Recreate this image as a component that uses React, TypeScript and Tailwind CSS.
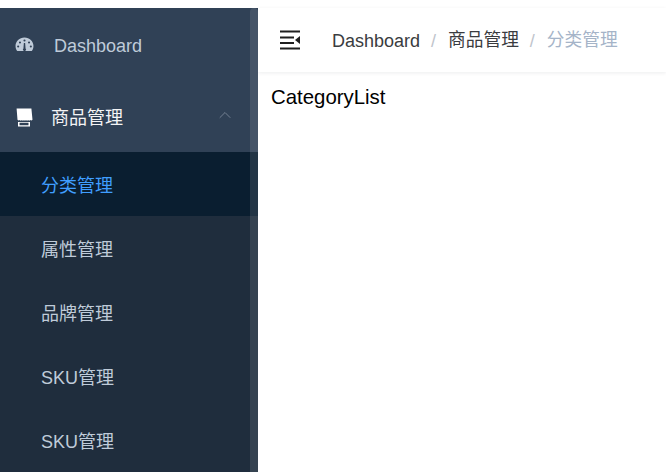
import React from "react";
import { ChevronUp } from "lucide-react";

const FONT = "font-['Liberation_Sans','Noto_Sans_CJK_SC',sans-serif]";

function GaugeIcon() {
  return (
    <svg width="19" height="15" viewBox="0 0 18 15" preserveAspectRatio="none">
      <path
        fill="#bfcbd9"
        fillRule="evenodd"
        d="M9 0.500C4.200 0.500 0.500 4.300 0.500 9c0 1.900 0.600 3.700 1.600 5.100h13.800c1-1.400 1.600-3.200 1.600-5.100C17.500 4.300 13.800 0.500 9 0.500zM9 2.500a1 1 0 1 1 0 2a1 1 0 0 1 0-2zM4.700 4.500a1 1 0 1 1 0 2a1 1 0 0 1 0-2zM13.300 4.500a1 1 0 1 1 0 2a1 1 0 0 1 0-2zM3 8.500a1 1 0 1 1 0 2a1 1 0 0 1 0-2zM15 8.500a1 1 0 1 1 0 2a1 1 0 0 1 0-2zM9.600 6l0.400 5.400a1.500 1.500 0 1 1-2 0L8.400 6z"
      />
    </svg>
  );
}

function ShopIcon() {
  return (
    <svg width="18" height="19" viewBox="0 0 18 19">
      <path fill="#ffffff" d="M1.600 0.500h14.800l1.100 11.300c-0.700 1-1.700 1-2.300 0.300c-0.600 0.700-1.500 0.700-2.100 0c-0.600 0.700-1.500 0.700-2.100 0c-0.600 0.700-1.500 0.700-2 0c-0.600 0.700-1.500 0.700-2.100 0c-0.600 0.700-1.500 0.700-2.100 0c-0.600 0.700-1.600 0.700-2.300-0.300z" />
      <path fill="#ffffff" d="M3 14h12v4.500H3zM4.500 14.800v2.400h9v-2.400z" />
    </svg>
  );
}

function CollapseIcon() {
  return (
    <svg width="22" height="20" viewBox="0 0 22 20">
      <path fill="#1f1f1f" d="M1 0.500h20v2H1zM1 6.500h14v2H1zM1 12h14v2H1zM1 17.500h20v2H1zM21 6v8l-5-4z" />
    </svg>
  );
}

function SubItem({ label, active }: { label: string; active?: boolean }) {
  return (
    <div
      className={
        active
          ? "h-16 flex items-center pl-[41px] pt-1 bg-[#0a1e30] text-[#409eff] text-lg"
          : "h-16 flex items-center pl-[41px] pt-1 bg-[#1f2d3d] text-[#bfcbd9] text-lg"
      }
    >
      {label}
    </div>
  );
}

export default function App() {
  return (
    <div className={`${FONT} h-[472px] w-[666px] overflow-hidden bg-white pt-2 flex`}>
      {/* Sidebar */}
      <div className="relative w-[258px] shrink-0 bg-[#304156] overflow-hidden">
        <div className="h-[72px] flex items-center pl-[15px] pt-px gap-[20px] text-lg text-[#bfcbd9]">
          <GaugeIcon />
          <span className="pt-[3px]">Dashboard</span>
        </div>
        <div className="h-[72px] flex items-center pl-[15px] pt-[2px] gap-[18px] text-lg text-[#f4f4f5]">
          <ShopIcon />
          <span className="pt-[2px]">商品管理</span>
          <ChevronUp className="ml-auto mr-[23px] mb-1 text-[#7f8c9c]" size={20} strokeWidth={1} />
        </div>
        <SubItem label="分类管理" active />
        <SubItem label="属性管理" />
        <SubItem label="品牌管理" />
        <SubItem label="SKU管理" />
        <SubItem label="SKU管理" />
        {/* scrollbar */}
        <div className="absolute right-0 top-0 bottom-0 w-2 bg-white/10 rounded-t-md" />
      </div>

      {/* Main */}
      <div className="flex-1 min-w-0">
        <div className="h-16 flex items-center pl-[21px] bg-white shadow-[0_1px_4px_rgba(0,21,41,0.08)] text-lg">
          <CollapseIcon />
          <div className="flex pt-[2px]">
            <span className="ml-[31px] text-[#3a3c40]">Dashboard</span>
            <span className="ml-[11px] mr-[12px] text-[#c0c4cc]">/</span>
            <span className="text-[#3a3c40] text-[17.7px]">商品管理</span>
            <span className="ml-[11px] mr-[12px] text-[#c0c4cc]">/</span>
            <span className="text-[#a5b4c8] text-[17.7px]">分类管理</span>
          </div>
        </div>
        <div className="pl-[13px] pt-[11px] text-[20.4px] leading-[28px] text-black">CategoryList</div>
      </div>
    </div>
  );
}
